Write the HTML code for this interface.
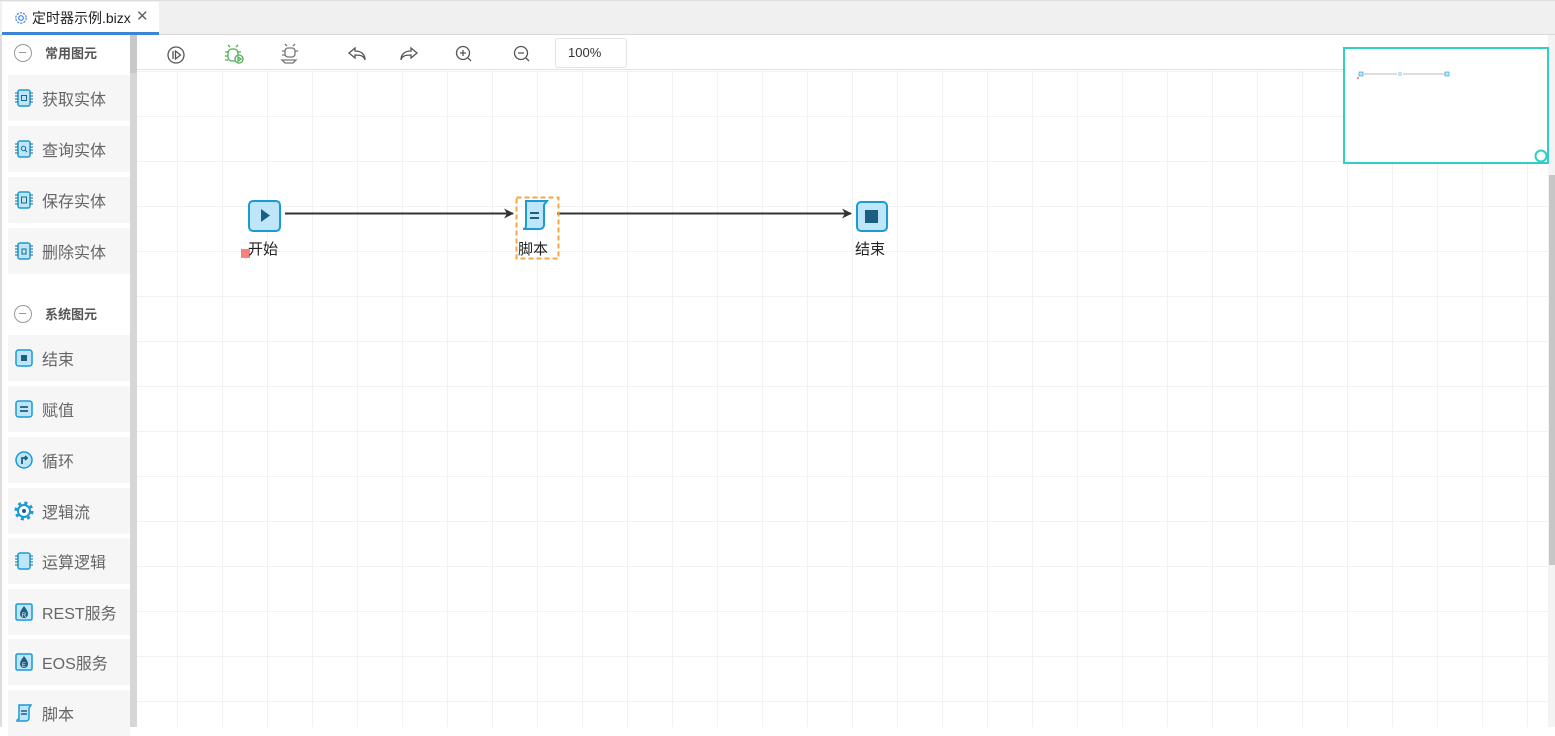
<!DOCTYPE html>
<html><head><meta charset="utf-8"><style>
*{margin:0;padding:0;box-sizing:border-box}
body{width:1555px;height:727px;overflow:hidden;background:#fff;font-family:"Liberation Sans","Noto Sans CJK SC",sans-serif;position:relative}
.tabbar{position:absolute;left:0;top:0;width:1555px;height:35px;background:#f0f0f0;border-top:1px solid #ddd;border-bottom:1px solid #d8d8d8}
.tab{position:absolute;left:2px;top:2px;width:157px;height:33px;background:#fff;border-bottom:3px solid #3c84d8;font-size:14px;color:#222;padding:6px 0 0 30px}
.tab .x{position:absolute;left:134px;top:5px;color:#666;font-size:15px}
.side{position:absolute;left:0;top:35px;width:137px;height:692px;background:#fff;border-left:2px solid #ddd}
.sb{position:absolute;left:130px;top:35px;width:7px;height:692px;background:#d6d6d6}
.sb:before{content:"";position:absolute;left:0;top:0;width:7px;height:38px;background:#c8c8c8}
.grp{position:absolute;left:12px;font-size:13px;font-weight:bold;color:#555;display:flex;align-items:center}
.grp i{display:inline-block;width:18px;height:18px;border:1.5px solid #999;border-radius:50%;margin-right:13px;position:relative}
.grp i:after{content:"";position:absolute;left:4px;top:7px;width:7px;height:1.5px;background:#999}
.it{position:absolute;left:8px;width:122px;height:46px;background:#f6f6f6;font-size:16px;color:#666;display:flex;align-items:center;padding-left:6px}
.it svg{margin-right:8px}
.canvas{position:absolute;left:137px;top:70px;width:1411px;height:657px;
background-image:linear-gradient(#f2f2f2 1px,transparent 1px),linear-gradient(90deg,#f2f2f2 1px,transparent 1px);
background-size:45px 45px;background-position:40px 46px}
.tb{position:absolute;left:137px;top:35px;width:1411px;height:35px;background:#fff;border-bottom:1px solid #e2e2e2}
.zoom{position:absolute;left:555px;top:38px;width:72px;height:30px;border:1px solid #e2e2e2;border-radius:3px;font-size:13px;color:#333;padding:6px 0 0 12px}
.vs{position:absolute;left:1548px;top:35px;width:7px;height:692px;background:#f3f3f3}
.vs:after{content:"";position:absolute;left:1px;top:140px;width:6px;height:390px;background:#c6c6c6}
.mini{position:absolute;left:1343px;top:47px;width:206px;height:117px;border:2px solid #2fcfc4;background:#fff}
.lbl{position:absolute;font-size:15px;color:#222}
</style></head><body>
<div class="tabbar"></div>
<div class="tab"><svg style="position:absolute;left:12px;top:9px" width="14" height="14" viewBox="0 0 14 14"><circle cx="7" cy="7" r="2.3" fill="none" stroke="#3c84d8" stroke-width="1.2"/><circle cx="7" cy="7" r="5.2" fill="none" stroke="#3c84d8" stroke-width="1.2" stroke-dasharray="2.2 1.1"/></svg>定时器示例.bizx<span class="x">✕</span></div>

<div class="side">
<div class="grp" style="top:8px"><i></i>常用图元</div>
<div class="grp" style="top:269px"><i></i>系统图元</div>
</div>
<div class="sb"></div>

<div class="it" style="top:75px"><svg width="20" height="20" viewBox="0 0 20 20"><rect x="4" y="2" width="12" height="16" rx="2" fill="#bfe6f8" stroke="#1a9ad6" stroke-width="1.5"/><path d="M1 5h3M1 8h3M1 11h3M1 14h3M16 5h3M16 8h3M16 11h3M16 14h3" stroke="#1a6a90"/><rect x="7.5" y="7.5" width="5" height="5" fill="none" stroke="#1a6a90"/></svg>获取实体</div>
<div class="it" style="top:126px"><svg width="20" height="20" viewBox="0 0 20 20"><rect x="4" y="2" width="12" height="16" rx="2" fill="#bfe6f8" stroke="#1a9ad6" stroke-width="1.5"/><path d="M1 5h3M1 8h3M1 11h3M1 14h3M16 5h3M16 8h3M16 11h3M16 14h3" stroke="#1a6a90"/><circle cx="9.5" cy="9.5" r="2.2" fill="none" stroke="#1a6a90"/><path d="M11 11l2 2" stroke="#1a6a90"/></svg>查询实体</div>
<div class="it" style="top:177px"><svg width="20" height="20" viewBox="0 0 20 20"><rect x="4" y="2" width="12" height="16" rx="2" fill="#bfe6f8" stroke="#1a9ad6" stroke-width="1.5"/><path d="M1 5h3M1 8h3M1 11h3M1 14h3M16 5h3M16 8h3M16 11h3M16 14h3" stroke="#1a6a90"/><rect x="7.5" y="7" width="5" height="6" fill="none" stroke="#1a6a90"/></svg>保存实体</div>
<div class="it" style="top:228px"><svg width="20" height="20" viewBox="0 0 20 20"><rect x="4" y="2" width="12" height="16" rx="2" fill="#bfe6f8" stroke="#1a9ad6" stroke-width="1.5"/><path d="M1 5h3M1 8h3M1 11h3M1 14h3M16 5h3M16 8h3M16 11h3M16 14h3" stroke="#1a6a90"/><rect x="8" y="8" width="4" height="5" fill="none" stroke="#1a6a90"/></svg>删除实体</div>

<div class="it" style="top:335px"><svg width="20" height="20" viewBox="0 0 20 20"><rect x="2" y="2" width="16" height="16" rx="2.5" fill="#bfe6f8" stroke="#1a9ad6" stroke-width="1.5"/><rect x="7" y="7" width="6" height="6" fill="#1b5f82"/></svg>结束</div>
<div class="it" style="top:386px"><svg width="20" height="20" viewBox="0 0 20 20"><rect x="2" y="2" width="16" height="16" rx="2.5" fill="#bfe6f8" stroke="#1a9ad6" stroke-width="1.5"/><path d="M6 8h8M6 12h8" stroke="#1b5f82" stroke-width="1.8"/></svg>赋值</div>
<div class="it" style="top:437px"><svg width="20" height="20" viewBox="0 0 20 20"><circle cx="10" cy="10" r="8" fill="#bfe6f8" stroke="#1a9ad6" stroke-width="1.5"/><path d="M8 14V8h4M11 6l2 2-2 2" fill="none" stroke="#1b5f82" stroke-width="1.8"/></svg>循环</div>
<div class="it" style="top:488px"><svg width="20" height="20" viewBox="0 0 20 20"><circle cx="10" cy="10" r="6" fill="#fff" stroke="#1a9ad6" stroke-width="2"/><circle cx="10" cy="10" r="8" fill="none" stroke="#1a9ad6" stroke-width="3" stroke-dasharray="3 3.3"/><circle cx="10" cy="10" r="2" fill="#1b5f82"/></svg>逻辑流</div>
<div class="it" style="top:538px"><svg width="20" height="20" viewBox="0 0 20 20"><rect x="4" y="2" width="12" height="16" rx="2" fill="#bfe6f8" stroke="#1a9ad6" stroke-width="1.5"/><path d="M1 5h3M1 8h3M1 11h3M1 14h3M16 5h3M16 8h3M16 11h3M16 14h3" stroke="#1a6a90"/></svg>运算逻辑</div>
<div class="it" style="top:589px"><svg width="20" height="20" viewBox="0 0 20 20"><rect x="2" y="2" width="16" height="16" rx="1.5" fill="#bfe6f8" stroke="#1a9ad6" stroke-width="1.5"/><path d="M10 4c-3 4-4 6-4 8a4 4 0 0 0 8 0c0-2-1-4-4-8z" fill="#1b5f82"/><text x="10" y="15" font-size="6" fill="#fff" text-anchor="middle">R</text></svg>REST服务</div>
<div class="it" style="top:639px"><svg width="20" height="20" viewBox="0 0 20 20"><rect x="2" y="2" width="16" height="16" rx="1.5" fill="#bfe6f8" stroke="#1a9ad6" stroke-width="1.5"/><path d="M10 4c-3 4-4 6-4 8a4 4 0 0 0 8 0c0-2-1-4-4-8z" fill="#1b5f82"/><text x="10" y="15" font-size="6" fill="#fff" text-anchor="middle">E</text></svg>EOS服务</div>
<div class="it" style="top:690px"><svg width="20" height="20" viewBox="0 0 20 20"><path d="M5 2h12l-2 3v10a3 3 0 0 1-3 3H3a2 2 0 0 1 2-2V2z" fill="#bfe6f8" stroke="#1a9ad6" stroke-width="1.5"/><path d="M7 8h6M7 11h6" stroke="#1b5f82" stroke-width="1.5"/></svg>脚本</div>

<div class="canvas"></div>
<div class="tb"></div>
<svg style="position:absolute;left:137px;top:35px" width="420" height="35" viewBox="0 0 420 35">
<g fill="none" stroke="#555" stroke-width="1.3">
<circle cx="39" cy="20" r="8"/><path d="M36 16v8M38.5 16l5 4-5 4z"/>
<path d="M218 13l-6 5 6 5v-3c6 0 9 1 10 5 0-6-4-9-10-9z"/>
<path d="M274 13l6 5-6 5v-3c-6 0-9 1-10 5 0-6 4-9 10-9z"/>
<circle cx="326" cy="18" r="6.5"/><path d="M331 23l3 3M326 15v6M323 18h6"/>
<circle cx="384" cy="18" r="6.5"/><path d="M389 23l3 3M381 18h6"/>
</g>
<g fill="none" stroke="#4caf50" stroke-width="1.3"><rect x="91" y="14" width="10" height="12" rx="4"/><path d="M93 12l-2-2M99 12l2-2M88 17h3M88 21h3M88 25h3M101 17h3"/><circle cx="102" cy="24" r="4" fill="#fff"/><path d="M101 22v4l3-2z"/></g>
<g fill="none" stroke="#777" stroke-width="1.3"><rect x="148" y="13" width="10" height="9" rx="3"/><path d="M150 11l-2-2M156 11l2-2M145 16h3M158 16h3M145 20h3M145 25h14l-3 3h-8z"/></g>
</svg>
<div class="zoom">100%</div>
<div class="vs"></div>

<div class="mini"><svg width="206" height="117"><g><rect x="14" y="23" width="4" height="4" fill="#bfe6f8" stroke="#1a9ad6" stroke-width=".6"/><line x1="19" y1="25" x2="52" y2="25" stroke="#bbb"/><rect x="53" y="23" width="4" height="4" fill="#bfe6f8"/><line x1="58" y1="25" x2="100" y2="25" stroke="#bbb"/><rect x="100" y="23" width="4" height="4" fill="#bfe6f8" stroke="#1a9ad6" stroke-width=".6"/><rect x="12" y="28" width="2" height="2" fill="#f88"/></g><circle cx="196" cy="107" r="5.5" fill="#fff" stroke="#2fcfc4" stroke-width="2"/></svg></div>

<svg style="position:absolute;left:0;top:0" width="1000" height="300">
<defs><marker id="a" markerWidth="10" markerHeight="10" refX="9" refY="5" orient="auto" markerUnits="userSpaceOnUse"><path d="M0 0L10 5 0 10 3 5z" fill="#333"/></marker></defs>
<line x1="285" y1="213.5" x2="513" y2="213.5" stroke="#333" stroke-width="2" marker-end="url(#a)"/>
<line x1="557" y1="213.5" x2="851" y2="213.5" stroke="#333" stroke-width="2" marker-end="url(#a)"/>
<rect x="249" y="201" width="31" height="30" rx="4" fill="#bfe6f8" stroke="#1a9ad6" stroke-width="2"/>
<path d="M261 209v13l9-6.5z" fill="#1b5f82"/>
<rect x="241" y="249" width="9" height="9" fill="#f36b6b" opacity=".85"/>
<rect x="516.5" y="197.5" width="42" height="61" fill="none" stroke="#f5a742" stroke-width="2" stroke-dasharray="5 3"/>
<path d="M526 201h21l-3 4v20a4 4 0 0 1-4 4h-17a3 3 0 0 0 3-3z" fill="#bfe6f8" stroke="#1a9ad6" stroke-width="2"/>
<path d="M530 213h9M530 218h9" stroke="#1b5f82" stroke-width="2"/>
<rect x="857" y="202" width="30" height="29" rx="4" fill="#bfe6f8" stroke="#1a9ad6" stroke-width="2"/>
<rect x="865" y="210" width="13" height="13" fill="#1b5f82"/>
</svg>
<div class="lbl" style="left:248px;top:238px">开始</div>
<div class="lbl" style="left:518px;top:238px">脚本</div>
<div class="lbl" style="left:855px;top:238px">结束</div>
</body></html>
